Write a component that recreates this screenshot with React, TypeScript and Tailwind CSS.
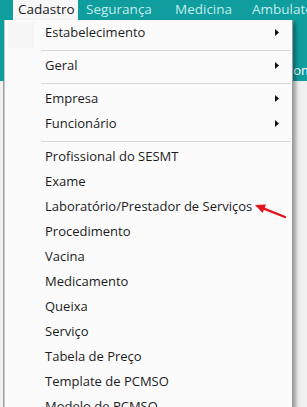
import React from "react";

type Item = { label?: string; sub?: boolean; sep?: boolean };

const items: Item[] = [
  { label: "Estabelecimento", sub: true },
  { sep: true },
  { label: "Geral", sub: true },
  { sep: true },
  { label: "Empresa", sub: true },
  { label: "Funcionário", sub: true },
  { sep: true },
  { label: "Profissional do SESMT" },
  { label: "Exame" },
  { label: "Laboratório/Prestador de Serviços" },
  { label: "Procedimento" },
  { label: "Vacina" },
  { label: "Medicamento" },
  { label: "Queixa" },
  { label: "Serviço" },
  { label: "Tabela de Preço" },
  { label: "Template de PCMSO" },
  { label: "Modelo de PCMSO" },
  { label: "Modelo de ASO" },
];

const font = { fontFamily: '"Open Sans", "Noto Sans", sans-serif' };

export default function App() {
  return (
    <div className="relative w-[307px] h-[407px] overflow-hidden bg-[#f0f0f0] text-[13px]" style={font}>
      {/* teal header */}
      <div className="h-[81px] bg-[#0f9d9d] flex flex-col">
        <div className="h-[20px] flex items-stretch text-[13.5px]">
          <div className="w-[13px] shrink-0" />
          <div className="w-[65px] shrink-0 bg-[#f7f7f7] flex items-center pl-[5px] text-[#1a1a1a] leading-none">Cadastro</div>
          <div className="w-[89px] shrink-0 flex items-center pl-[8px] text-[#c4ecec] leading-none">Segurança</div>
          <div className="w-[77px] shrink-0 flex items-center pl-[8px] text-[#c4ecec] leading-none">Medicina</div>
          <div className="shrink-0 flex items-center pl-[8px] text-[#c4ecec] leading-none whitespace-nowrap">Ambulatório</div>
        </div>
        <div className="flex-1 flex items-end pb-[3px]">
          <span className="ml-[285px] text-white whitespace-nowrap leading-[16px]">Com</span>
        </div>
      </div>
      {/* lower gray panel */}
      <div className="h-[326px] flex">
        <div className="w-[3px]" />
        <div className="flex-1 border-l border-[#a8a8a8]" />
      </div>

      {/* dropdown */}
      <div className="absolute left-[4px] top-[20px] w-[289px] h-[420px] bg-[#fbfbfb] border border-t-0 border-[#c8c8c8] border-r-[#9a9a9a] shadow-[3px_3px_4px_rgba(0,0,0,0.35)] pt-[1px] text-[#1b1b1b]">
        <div className="absolute left-[3px] top-[2px] w-[26px] h-[26px] bg-[#f6f6f6]" />
        {items.map((it, i) =>
          it.sep ? (
            <div key={i} className="h-[8px] flex items-center pl-[36px] pr-[1px]">
              <div className="h-px w-full bg-[#d7d7d7]" />
            </div>
          ) : (
            <div key={i} className="relative h-[25px] flex items-center pl-[40px] pr-[13px] pb-[3px] whitespace-nowrap">
              <span className="leading-none">{it.label}</span>
              {it.sub && (
                <svg className="ml-auto" width="4" height="7" viewBox="0 0 4 7">
                  <polygon points="0,0 4,3.5 0,7" fill="#111" />
                </svg>
              )}
            </div>
          )
        )}
      </div>

      {/* red annotation arrow */}
      <svg className="absolute left-[250px] top-[198px]" width="40" height="24" viewBox="0 0 40 24">
        <line x1="14" y1="10.6" x2="35" y2="19" stroke="#e3161b" strokeWidth="2.4" strokeLinecap="round" />
        <polygon points="5,7 16,6.5 12.6,14.9" fill="#e3161b" />
      </svg>
    </div>
  );
}
